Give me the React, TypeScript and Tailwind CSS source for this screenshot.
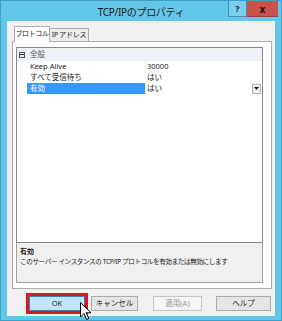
export default function App() {
  return (
    <div className="relative w-[282px] h-[321px] bg-[#62c6e9] border border-[#3f9fc4] flex flex-col overflow-hidden font-['Noto_Sans','Noto_Sans_CJK_JP',sans-serif] text-[#1e1e1e]">
      {/* Title bar */}
      <div className="h-[20px] flex items-start shrink-0">
        <div className="w-[53px]" />
        <div className="flex-1 text-center text-[10px] leading-[12px] pt-[5px] tracking-[-0.3px] text-[#1a1a1a]">
          TCP/IPのプロパティ
        </div>
        <div className="flex mr-[3px]">
          <div className="w-[19px] h-[16px] bg-[#78cfee] border border-[#3b8fb2] border-t-0 flex items-center justify-center text-[9px] font-bold leading-none text-[#1a2a33]">
            ?
          </div>
          <div className="w-[31px] h-[16px] bg-[#c8524c] border-b border-[#a03c38] flex items-center justify-center text-[10px] font-bold leading-none text-[#2a1412]">
            x
          </div>
        </div>
      </div>

      {/* Client area */}
      <div className="flex-1 mx-[6px] mb-[4px] bg-[#f0f0f0] flex flex-col">
        {/* Tabs */}
        <div className="relative z-10 flex items-end pl-[7px] pt-[5px] -mb-px">
          <div className="w-[36px] h-[16px] bg-white border border-[#acacac] border-b-0 text-[7px] leading-[14px] text-center whitespace-nowrap tracking-[-0.4px]">
            プロトコル
          </div>
          <div className="w-[39px] h-[14px] bg-[#ececec] border border-l-0 border-[#acacac] text-[7px] leading-[12px] text-center whitespace-nowrap tracking-[-0.3px]">
            IP アドレス
          </div>
        </div>

        {/* Tab panel */}
        <div className="ml-[5px] mr-[3px] border border-[#acacac] bg-white pt-[5px] pl-[3px] pr-[8px] pb-[5px]">
          {/* Property grid */}
          <div className="h-[196px] border border-[#828790] bg-white text-[7.5px] leading-[11px]">
            <div className="h-[13px] bg-[#eef1f6] flex items-center">
              <div className="w-[10px] flex justify-center">
                <div className="w-[6px] h-[6px] border border-[#555] flex items-center justify-center">
                  <div className="w-[4px] h-px bg-[#333]" />
                </div>
              </div>
              <span className="pl-[3px] text-[#555]">全般</span>
            </div>
            {[
              { name: 'Keep Alive', value: '30000' },
              { name: 'すべて受信待ち', value: 'はい' },
              { name: '有効', value: 'はい', selected: true },
            ].map((row) => (
              <div key={row.name} className="h-[11px] flex">
                <div className="w-[10px] shrink-0" />
                <div
                  className={`w-[118px] shrink-0 pl-[3px] ${
                    row.selected ? 'bg-[#3399ff] text-white' : ''
                  }`}
                >
                  {row.name}
                </div>
                <div className="w-px bg-[#eef1f6]" />
                <div className="flex-1 flex items-center pl-[1px]">
                  <span className="flex-1">{row.value}</span>
                  {row.selected && (
                    <div className="w-[9px] h-[10px] mr-[1px] bg-[#f4f4f4] border border-[#b4b4b4] flex items-center justify-center">
                      <svg width="5" height="3" viewBox="0 0 5 3">
                        <path d="M0 0 H5 L2.5 3 Z" fill="#111" />
                      </svg>
                    </div>
                  )}
                </div>
              </div>
            ))}
          </div>

          {/* Description */}
          <div className="h-[40px] border border-t-0 border-[#a0a0a0] bg-[#f0f0f0] pl-[3px] pt-[4px] text-[7px] leading-[10px]">
            <div className="font-bold">有効</div>
            <div className="text-[6.6px] tracking-[-0.4px] whitespace-nowrap">このサーバー インスタンスの TCP/IP プロトコルを有効または無効にします</div>
          </div>
        </div>

        {/* Buttons */}
        <div className="flex items-center mt-[4px] pl-[19px] text-[7.5px]">
          <div className="border-[3px] border-[#e0141c]">
            <div className="w-[56px] h-[15px] bg-[#bee6fd] border border-[#3c7fb1] flex items-center justify-center">
              OK
            </div>
          </div>
          <div className="ml-[3px] w-[47px] h-[15px] bg-[#e5e5e5] border border-[#acacac] flex items-center justify-center">
            キャンセル
          </div>
          <div className="ml-[15px] w-[49px] h-[15px] bg-[#f4f4f4] border border-[#c5c5c5] flex items-center justify-center text-[#9a9a9a]">
            適用(A)
          </div>
          <div className="ml-[14px] w-[55px] h-[15px] bg-[#e5e5e5] border border-[#acacac] flex items-center justify-center">
            ヘルプ
          </div>
        </div>
      </div>

      {/* Mouse cursor */}
      <svg className="absolute left-[79px] top-[301px]" width="12" height="19" viewBox="0 0 12 19">
        <path d="M0.5 0.5 L0.5 15 L4 11.5 L6.5 17.5 L8.8 16.5 L6.3 10.8 L11 10.8 Z" fill="#fff" stroke="#000" strokeWidth="1" />
      </svg>
    </div>
  )
}
